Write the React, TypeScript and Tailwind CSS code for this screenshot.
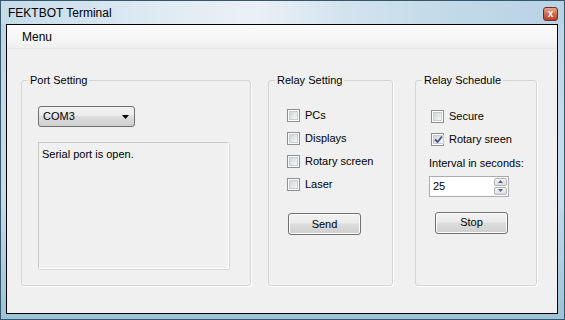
import React from 'react';

const font = "font-['Liberation_Sans',Arial,sans-serif]";

const Check: React.FC<{ label: string; checked?: boolean }> = ({ label, checked }) => (
  <div className="flex items-center h-[23px]">
    <span className="w-[13px] h-[13px] border border-[#8e8f8f] bg-white p-[1px] flex">
      <span className="flex-1 border border-[#c9ccd2] bg-[linear-gradient(135deg,#d2d5da,#f7f7f7)] flex items-center justify-center">
        {checked && (
          <svg width="9" height="9" viewBox="0 0 9 9">
            <path d="M1 4.5 L3.5 7 L8 1.5" fill="none" stroke="#3d5193" strokeWidth="1.8" />
          </svg>
        )}
      </span>
    </span>
    <span className="ml-[5px] text-[11px] text-black">{label}</span>
  </div>
);

const Btn: React.FC<{ label: string; className?: string }> = ({ label, className }) => (
  <div
    className={`h-[22px] w-[73px] rounded-[3px] border border-[#707070] bg-[linear-gradient(#f2f2f2,#ebebeb_45%,#dddddd_50%,#cfcfcf)] shadow-[inset_0_0_0_1px_#fcfcfc] flex items-center justify-center text-[11px] text-black ${className ?? ''}`}
  >
    {label}
  </div>
);

const Group: React.FC<{ title: string; className: string; children: React.ReactNode }> = ({ title, className, children }) => (
  <fieldset className={`h-[212px] rounded-[3px] border border-[#d5d5d5] shadow-[1px_1px_0_#ffffff] ${className}`}>
    <legend className="ml-[6px] px-[2px] text-[11px] leading-[13px] text-black">{title}</legend>
    {children}
  </fieldset>
);

export default function App() {
  return (
    <div className={`w-[565px] h-[320px] flex flex-col border border-[#36566a] bg-[linear-gradient(#bdd6e7,#c6dcea_60%,#9cc3d8)] ${font}`}>
      {/* title bar */}
      <div className="h-[23px] flex items-center justify-between pl-[7px] pr-[6px] bg-[linear-gradient(90deg,#c4dbea,#dde9f2_25%,#eaf1f6_45%,#d4e4ef_60%,#c2d9e8_80%,#b9d3e5)]">
        <span className="text-[12px] text-black">FEKTBOT Terminal</span>
        <div className="w-[15px] h-[14px] mt-[2px] rounded-[3px] border border-[#6e2d22] bg-[linear-gradient(#e5a590,#d06a50_50%,#b8402a)] flex items-center justify-center">
          <span className="text-white text-[10px] font-bold leading-none">x</span>
        </div>
      </div>

      {/* client area */}
      <div className="flex-1 ml-[5px] mr-[6px] mb-[5px] border border-black bg-[#f0f0f0] flex flex-col">
        {/* menu bar */}
        <div className="h-[24px] flex items-center pl-[15px] bg-[linear-gradient(#fbfbfb,#f6f6f6_60%,#efefef)] border-b border-[#e8e8e8]">
          <span className="text-[12px] text-black">Menu</span>
        </div>

        <div className="flex pl-[14px] pt-[25px]">
          <Group title="Port Setting" className="w-[230px]">
            <div className="pl-[16px] pt-[19px]">
              <div className="w-[97px] h-[21px] rounded-[3px] border border-[#707070] bg-[linear-gradient(#f2f2f2,#ebebeb_45%,#dddddd_50%,#cfcfcf)] flex items-center justify-between pl-[4px] pr-[5px]">
                <span className="text-[11px] text-black">COM3</span>
                <svg width="7" height="4" viewBox="0 0 7 4">
                  <path d="M0 0 H7 L3.5 4 Z" fill="#000" />
                </svg>
              </div>
              <div className="mt-[15px] w-[191px] h-[127px] border border-[#c9c9c9] border-r-white border-b-white shadow-[1px_1px_0_#d8d8d8] pl-[3px] pt-[3px] text-[11px] text-black">
                Serial port is open.
              </div>
            </div>
          </Group>

          <Group title="Relay Setting" className="w-[125px] ml-[17px]">
            <div className="pl-[18px] pt-[17px]">
              <Check label="PCs" />
              <Check label="Displays" />
              <Check label="Rotary screen" />
              <Check label="Laser" />
              <Btn label="Send" className="mt-[17px] ml-[1px]" />
            </div>
          </Group>

          <Group title="Relay Schedule" className="w-[122px] ml-[22px]">
            <div className="pl-[15px] pt-[18px]">
              <Check label="Secure" />
              <Check label="Rotary sreen" checked />
              <div className="mt-[4px] ml-[-2px] text-[11px] text-black">Interval in seconds:</div>
              <div className="mt-[4px] ml-[-2px] w-[80px] h-[21px] border border-[#abadb3] bg-white flex items-center justify-between pl-[3px] pr-[1px]">
                <span className="text-[11px] text-black">25</span>
                <div className="flex flex-col w-[13px] h-[17px] gap-[1px]">
                  <div className="flex-1 border border-[#b5b5b5] rounded-[2px] bg-[linear-gradient(#f4f4f4,#dcdcdc)] flex items-center justify-center">
                    <svg width="5" height="3" viewBox="0 0 5 3"><path d="M0 3 L2.5 0 L5 3 Z" fill="#4d6185" /></svg>
                  </div>
                  <div className="flex-1 border border-[#b5b5b5] rounded-[2px] bg-[linear-gradient(#f4f4f4,#dcdcdc)] flex items-center justify-center">
                    <svg width="5" height="3" viewBox="0 0 5 3"><path d="M0 0 H5 L2.5 3 Z" fill="#4d6185" /></svg>
                  </div>
                </div>
              </div>
              <Btn label="Stop" className="mt-[15px] ml-[4px]" />
            </div>
          </Group>
        </div>
      </div>
    </div>
  );
}
